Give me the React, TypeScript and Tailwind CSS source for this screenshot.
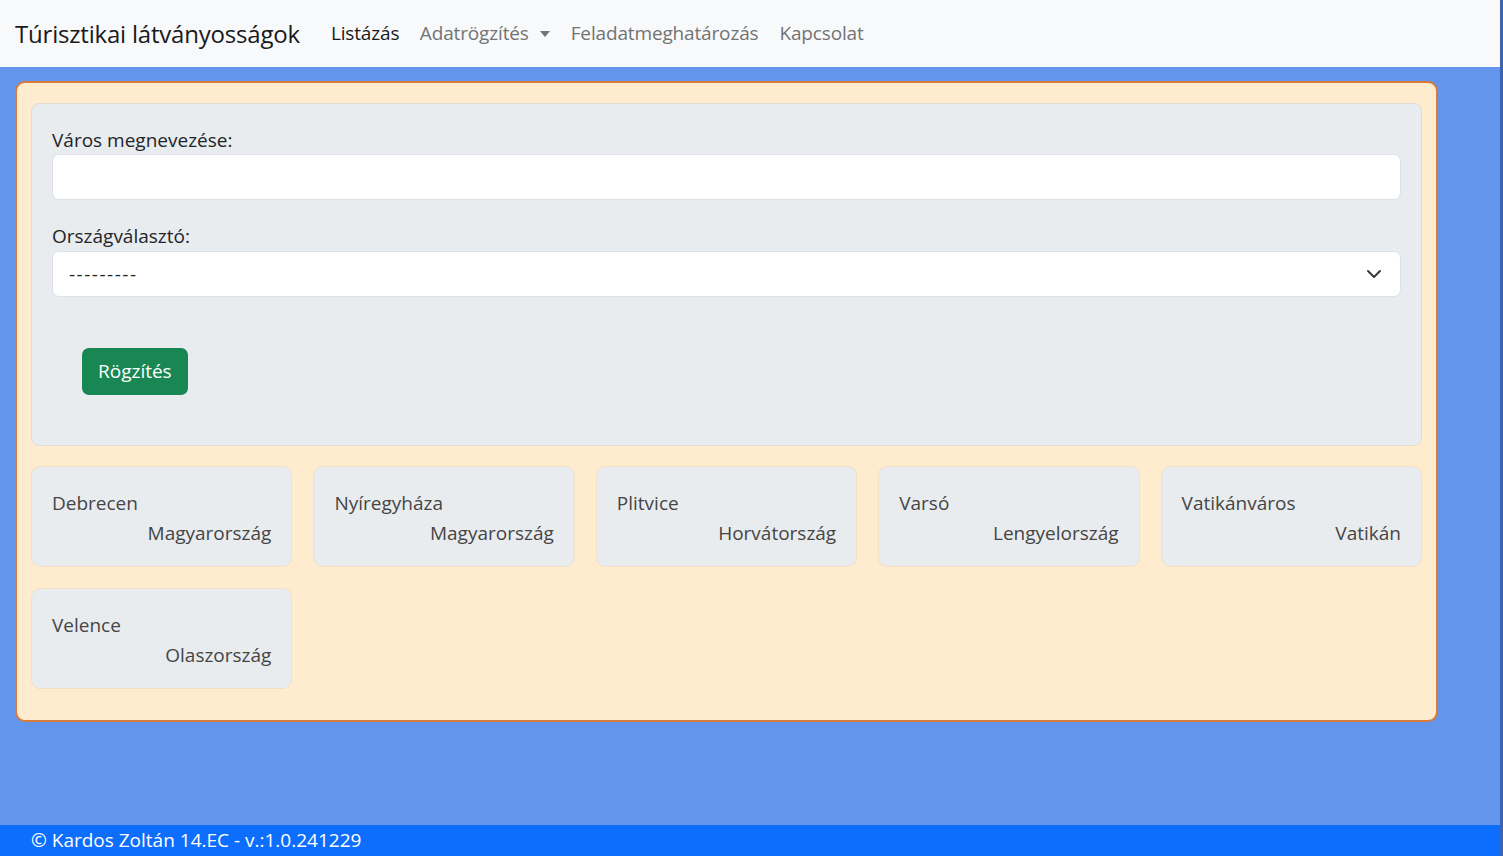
import React from "react";

const cities = [
  { city: "Debrecen", country: "Magyarország" },
  { city: "Nyíregyháza", country: "Magyarország" },
  { city: "Plitvice", country: "Horvátország" },
  { city: "Varsó", country: "Lengyelország" },
  { city: "Vatikánváros", country: "Vatikán" },
  { city: "Velence", country: "Olaszország" },
];

export default function App() {
  return (
    <div
      className="flex flex-col h-[856px] w-[1503px] overflow-hidden bg-[#6495ed] border-r-[3px] border-[#3b63b0]"
      style={{ fontFamily: '"Open Sans", "Noto Sans", sans-serif' }}
    >
      <nav className="flex items-center h-[67px] bg-[#f8f9fa] pl-[15px] shrink-0">
        <span className="text-[24px] text-[#1a1a1a] mr-[21px] tracking-[-0.2px]">Túrisztikai látványosságok</span>
        <div className="flex items-center text-[19px] tracking-[-0.15px]">
          <span className="pr-[10px] pl-[10px] text-[#1a1a1a]">Listázás</span>
          <span className="px-[10.5px] text-[#737373] flex items-center">
            Adatrögzítés
            <span className="ml-[11px] inline-block w-0 h-0 border-l-[5.5px] border-r-[5.5px] border-t-[6px] border-l-transparent border-r-transparent border-t-[#737373]" />
          </span>
          <span className="px-[10.5px] text-[#737373]">Feladatmeghatározás</span>
          <span className="px-[10.5px] text-[#737373]">Kapcsolat</span>
        </div>
      </nav>

      <main className="flex-1 pt-[14px] pl-[15px] pr-[62px]">
        <div className="bg-[#ffebcd] border-2 border-[#d57b3c] rounded-[10px] px-[14px] pt-[20px] pb-[31px]">
          <div className="bg-[#e9ecef] border border-[#dfdcd6] rounded-[8px] px-[20px] pt-[23px] pb-[50px]">
            <label className="block text-[19px] text-[#212529] leading-[27px]">Város megnevezése:</label>
            <div className="h-[46px] bg-white border border-[#dee2e6] rounded-[7px]" />
            <label className="block text-[19px] text-[#212529] leading-[27px] mt-[23px] mb-[1px]">Országválasztó:</label>
            <div className="h-[46px] bg-white border border-[#dee2e6] rounded-[7px] flex items-center justify-between pl-[16px] pr-[18px]">
              <span className="text-[19px] text-[#212529] tracking-[1.5px]">---------</span>
              <svg width="16" height="16" viewBox="0 0 16 16" fill="none" stroke="#343a40" strokeWidth="2" strokeLinecap="round" strokeLinejoin="round">
                <path d="M2 5l6 6 6-6" />
              </svg>
            </div>
            <button className="mt-[51px] ml-[30px] h-[47px] px-[16px] bg-[#198754] text-white text-[19px] rounded-[7px]">
              Rögzítés
            </button>
          </div>

          <div className="grid grid-cols-5 gap-x-[21px] gap-y-[21px] mt-[20px]">
            {cities.map((c) => (
              <div key={c.city} className="h-[101px] bg-[#e9ecef] border border-[#f2dfc6] rounded-[9px] px-[20px] pt-[23px]">
                <div className="text-[19px] text-[#454545] leading-[27px]">{c.city}</div>
                <div className="text-[19px] text-[#454545] leading-[27px] text-right mt-[3px]">{c.country}</div>
              </div>
            ))}
          </div>
        </div>
      </main>

      <footer className="h-[31px] bg-[#0d6efd] text-white text-[19px] flex items-center pl-[31px] shrink-0">
        © Kardos Zoltán 14.EC - v.:1.0.241229
      </footer>
    </div>
  );
}
